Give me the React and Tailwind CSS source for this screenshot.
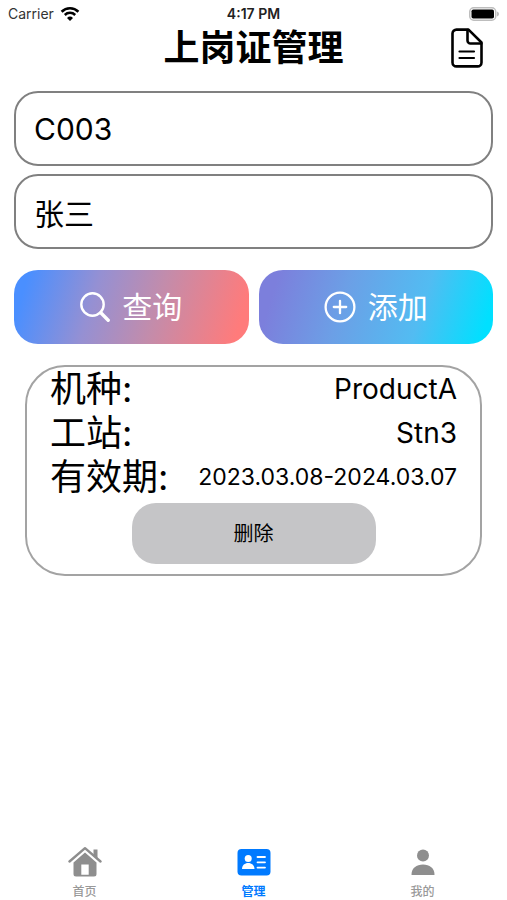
import React from 'react';

const WifiIcon = () => (
  <svg viewBox="0 0 20 15" className="w-5 h-4" fill="none" stroke="#000" aria-hidden="true">
    <path d="M1.6 5.2a12 12 0 0 1 16.8 0" strokeWidth="2.6" />
    <path d="M4.8 8.5a7.4 7.4 0 0 1 10.4 0" strokeWidth="2.5" />
    <path d="M10 14.4 7 11.4a4.3 4.3 0 0 1 6 0z" fill="#000" stroke="none" />
  </svg>
);

const BatteryIcon = () => (
  <svg viewBox="0 0 30 14" className="w-[30px] h-[14px]" aria-hidden="true">
    <rect x="0.75" y="0.75" width="26" height="12.5" rx="4" fill="#fff" stroke="#bdbdbd" strokeWidth="1.5" />
    <rect x="2.5" y="2.5" width="22.5" height="9" rx="1.8" fill="#000" />
    <path d="M28 4.6c1.4.5 2 1.4 2 2.4s-.6 1.900-2 2.400z" fill="#bdbdbd" />
  </svg>
);

const DocumentIcon = () => (
  <svg viewBox="0 0 32 40" className="w-8 h-10" fill="none" stroke="#000" strokeWidth="2.6" strokeLinejoin="round" strokeLinecap="round" aria-hidden="true">
    <path d="M17.500 1.600H5.500a4 4 0 0 0-4 4v28.800a4 4 0 0 0 4 4h21a4 4 0 0 0 4-4V14.500z" />
    <path d="M16.500 2v10.500a3 3 0 0 0 3 3h10.800" />
    <path d="M8.500 23.500h14.500M8.500 30h14.500" strokeWidth="2.200" />
  </svg>
);

const SearchIcon = () => (
  <svg viewBox="0 0 30 30" className="w-[30px] h-[30px]" fill="none" stroke="#fff" aria-hidden="true">
    <circle cx="12.500" cy="12.500" r="11.200" strokeWidth="2.400" />
    <path d="M20.800 20.800l7.400 7.400" strokeWidth="3.400" strokeLinecap="round" />
  </svg>
);

const PlusIcon = () => (
  <svg viewBox="0 0 32 32" className="w-8 h-8" fill="none" stroke="#fff" strokeWidth="2.300" strokeLinecap="round" aria-hidden="true">
    <circle cx="16" cy="16" r="14.400" />
    <path d="M16 9.800v12.400M9.800 16h12.400" />
  </svg>
);

const HomeIcon = () => (
  <svg viewBox="0 0 34 32" className="w-[34px] h-8" aria-hidden="true">
    <path d="M25.500 3.500h4v9l-4-3.600z" fill="#8e8e8e" />
    <path d="M1.500 15.500 17 2.200 32.500 15.500" fill="none" stroke="#8e8e8e" strokeWidth="2.400" strokeLinecap="round" strokeLinejoin="round" />
    <path fillRule="evenodd" d="M17 6.500 28.500 16.500V28a2.500 2.500 0 0 1-2.500 2.500H8A2.500 2.500 0 0 1 5.500 28V16.500zM13.300 18.500v10.200h7.400V18.500z" fill="#8e8e8e" />
  </svg>
);

const CardIcon = () => (
  <svg viewBox="0 0 34 32" className="w-[34px] h-8" aria-hidden="true">
    <rect x="0.500" y="3" width="33" height="26.500" rx="4" fill="#007aff" />
    <circle cx="11.200" cy="12.600" r="3.500" fill="#fff" />
    <path d="M5 23c0-3.800 2.800-6 6.200-6s6.300 2.200 6.300 6z" fill="#fff" />
    <path d="M20.500 11h7.500M20.500 16.300h7.500M20.500 21.600h7.500" stroke="#fff" strokeWidth="1.800" strokeLinecap="round" />
  </svg>
);

const PersonIcon = () => (
  <svg viewBox="0 0 34 32" className="w-[34px] h-8" fill="#8e8e8e" aria-hidden="true">
    <circle cx="17" cy="9.500" r="6" />
    <path d="M5.500 28.500c0-6.200 5-10 11.500-10s11.500 3.800 11.500 10q0 .5-.5.500h-22q-.5 0-.5-.5z" />
  </svg>
);

const Field = ({ label, value }) => (
  <input
    aria-label={label}
    defaultValue={value}
    className="block w-full h-[75px] rounded-3xl border-2 border-[#808080] bg-white px-[18px] text-3xl text-black outline-none"
  />
);

const ActionButton = ({ icon, label, gradient }) => (
  <button type="button" className={`flex flex-1 h-[74px] items-center justify-center gap-3 rounded-3xl text-3xl text-white ${gradient}`}>
    {icon}
    {label}
  </button>
);

const InfoRow = ({ label, value, valueSize }) => (
  <div className="flex h-11 items-center justify-between">
    <dt className="text-4xl">{label}</dt>
    <dd className={valueSize}>{value}</dd>
  </div>
);

const tabs = [
  { label: '首页', icon: <HomeIcon />, color: 'text-[#999999]' },
  { label: '管理', icon: <CardIcon />, color: 'text-[#007aff]', active: true },
  { label: '我的', icon: <PersonIcon />, color: 'text-[#999999]' },
];

export default function App() {
  return (
    <div className="flex min-h-screen flex-col bg-white text-black font-['Inter','Noto_Sans_CJK_SC',sans-serif]">
      <div className="grid h-7 grid-cols-3 items-center px-2 text-sm">
        <div className="flex items-center gap-1.5 text-[#333333]">
          Carrier
          <WifiIcon />
        </div>
        <div className="text-center font-semibold text-[#222222]">4:17 PM</div>
        <div className="flex justify-end">
          <BatteryIcon />
        </div>
      </div>

      <header className="grid h-10 grid-cols-[1fr_auto_1fr] items-center px-6">
        <h1 className="col-start-2 text-4xl font-bold">上岗证管理</h1>
        <button type="button" aria-label="文档" className="justify-self-end">
          <DocumentIcon />
        </button>
      </header>

      <main className="flex-1 px-[14px] pt-[23px]">
        <div className="flex flex-col gap-2">
          <Field label="工号" value="C003" />
          <Field label="姓名" value="张三" />
        </div>

        <div className="mt-[21px] flex gap-[10px]">
          <ActionButton icon={<SearchIcon />} label="查询" gradient="bg-[linear-gradient(107deg,#4a8fff_6%,#9590d3_34%,#c38cab_60%,#ff7b7b_94%)]" />
          <ActionButton icon={<PlusIcon />} label="添加" gradient="bg-[linear-gradient(107deg,#7c7fdc_8%,#6c9fe6_36%,#52bcf2_68%,#00e0ff_95%)]" />
        </div>

        <section className="mx-[11px] mt-[21px] rounded-[40px] border-2 border-[#a3a3a3] px-[23px] pb-[10px]">
          <dl>
            <InfoRow label="机种:" value="ProductA" valueSize="text-[28px]" />
            <InfoRow label="工站:" value="Stn3" valueSize="text-[28px]" />
            <InfoRow label="有效期:" value="2023.03.08-2024.03.07" valueSize="text-[23px]" />
          </dl>
          <button type="button" className="mx-auto mt-1 block h-[61px] w-[244px] rounded-3xl bg-[#c5c5c7] text-xl">
            删除
          </button>
        </section>
      </main>

      <nav className="flex h-[54px]">
        {tabs.map((tab) => (
          <a
            key={tab.label}
            href="#"
            aria-current={tab.active ? 'page' : undefined}
            className={`flex flex-1 flex-col items-center gap-1.5 text-xs ${tab.color} ${tab.active ? 'font-bold' : 'font-medium'}`}
          >
            {tab.icon}
            <span>{tab.label}</span>
          </a>
        ))}
      </nav>
    </div>
  );
}
